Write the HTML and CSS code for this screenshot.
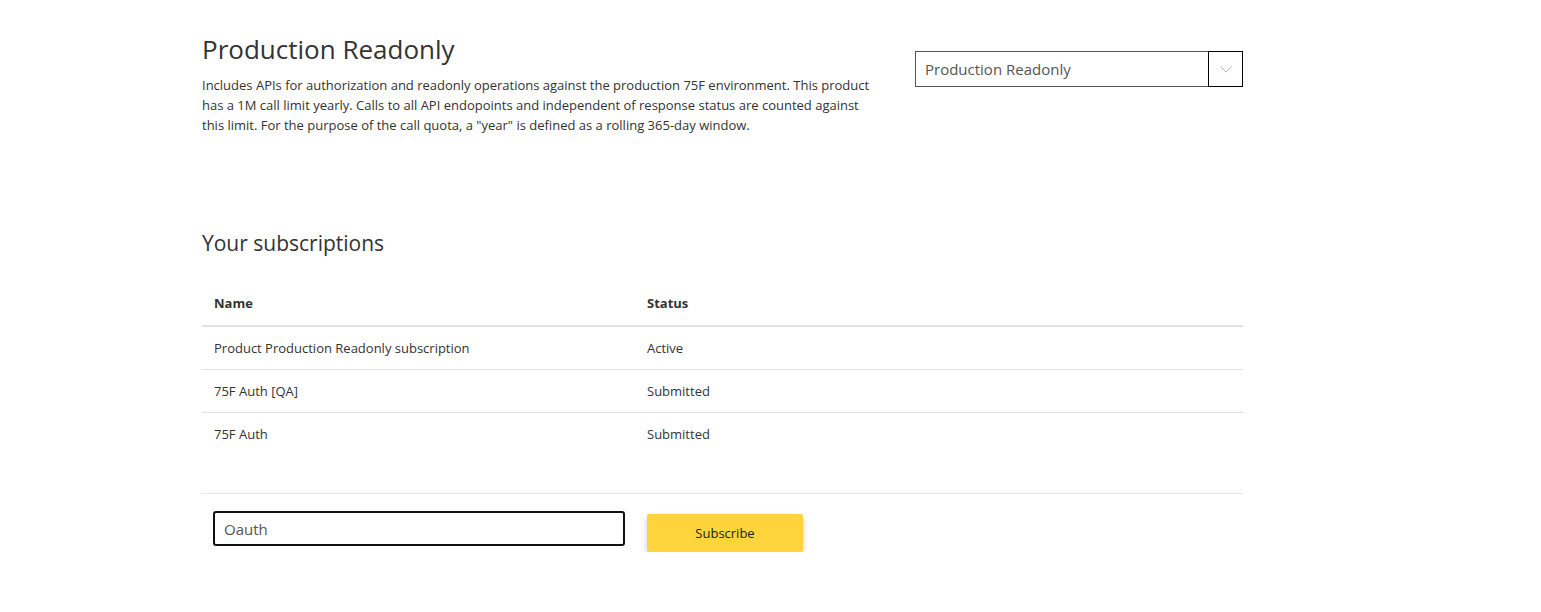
FILE: index.html
```html
<!DOCTYPE html>
<html lang="en">
<head>
    <meta charset="UTF-8">
    <meta name="viewport" content="width=device-width, initial-scale=1.0">
    <title>Production Readonly</title>
    <link rel="stylesheet" href="styles.css">
</head>
<body>

    <div class="page">
        <div class="product-header">
            <div class="product-info">
                <h1>Production Readonly</h1>
                <p class="description">Includes APIs for authorization and readonly operations against the production 75F environment. This product has a 1M call limit yearly. Calls to all API endopoints and independent of response status are counted against this limit. For the purpose of the call quota, a "year" is defined as a rolling 365-day window.</p>
            </div>
            <div class="product-select">
                <span class="select-value">Production Readonly</span>
                <span class="select-arrow">
                    <svg width="12" height="7" viewBox="0 0 12 7"><path d="M0.5 0.5 L6 6 L11.5 0.5" fill="none" stroke="#d9a89a" stroke-width="1"/></svg>
                </span>
            </div>
        </div>

        <h2>Your subscriptions</h2>

        <table class="subscriptions">
            <thead>
                <tr>
                    <th class="col-name">Name</th>
                    <th>Status</th>
                </tr>
            </thead>
            <tbody>
                <tr>
                    <td>Product Production Readonly subscription</td>
                    <td>Active</td>
                </tr>
                <tr>
                    <td>75F Auth [QA]</td>
                    <td>Submitted</td>
                </tr>
                <tr>
                    <td>75F Auth</td>
                    <td>Submitted</td>
                </tr>
            </tbody>
        </table>

        <div class="subscribe-row">
            <input type="text" class="subscribe-input" value="Oauth" autofocus>
            <button class="subscribe-button">Subscribe</button>
        </div>
    </div>

</body>
</html>
```

FILE: styles.css
```css
body {
    font-family: "Open Sans", "Noto Sans", sans-serif;
    color: #333;
    background-color: #fff;
    margin: 0;
    padding: 0;
}

.page {
    width: 1041px;
    margin-left: 202px;
    padding-top: 31px;
}

.product-header {
    display: flex;
    justify-content: space-between;
    align-items: flex-start;
}

.product-info {
    width: 675px;
}

h1 {
    font-size: 26px;
    font-weight: 400;
    margin: 0;
    line-height: 36px;
}

.description {
    font-size: 13px;
    line-height: 20px;
    margin: 8px 0 0;
}

.product-select {
    display: flex;
    width: 328px;
    height: 36px;
    box-sizing: border-box;
    border: 1px solid #555;
    margin-top: 20px;
}

    .select-value {
        flex: 1;
        font-size: 15px;
        color: #555;
        line-height: 34px;
        padding-left: 9px;
    }

    .select-arrow {
        width: 33px;
        display: flex;
        align-items: center;
        justify-content: center;
        margin: -1px -1px -1px 0;
        border: 1px solid #000;
    }

h2 {
    font-size: 21px;
    font-weight: 400;
    margin: 94px 0 0;
    line-height: 28px;
}

.subscriptions {
    width: 100%;
    border-collapse: collapse;
    margin-top: 24px;
    font-size: 13px;
}

    .subscriptions th {
        text-align: left;
        font-weight: 700;
        height: 44px;
        padding: 0 12px;
        border-bottom: 2px solid #e2e2e5;
    }

    .subscriptions .col-name {
        width: 409px;
    }

    .subscriptions td {
        height: 42px;
        padding: 0 12px;
        border-bottom: 1px solid #e2e2e5;
    }

    .subscriptions tbody tr:last-child td {
        border-bottom: none;
    }

.subscribe-row {
    display: flex;
    align-items: flex-start;
    gap: 22px;
    margin-top: 38px;
    border-top: 1px solid #e5e5e5;
    padding: 17px 11px 0;
}

.subscribe-input {
    width: 412px;
    height: 35px;
    box-sizing: border-box;
    border: 2px solid #111;
    border-radius: 3px;
    padding: 0 9px;
    font-family: inherit;
    font-size: 15px;
    color: #555;
    outline: none;
}

.subscribe-button {
    width: 156px;
    height: 38px;
    margin-top: 3px;
    background-color: #fdd43b;
    border: none;
    border-radius: 2px;
    box-shadow: 0 3px 6px rgba(0, 0, 0, 0.2);
    font-family: inherit;
    font-size: 13px;
    color: #222;
    cursor: pointer;
}
```
